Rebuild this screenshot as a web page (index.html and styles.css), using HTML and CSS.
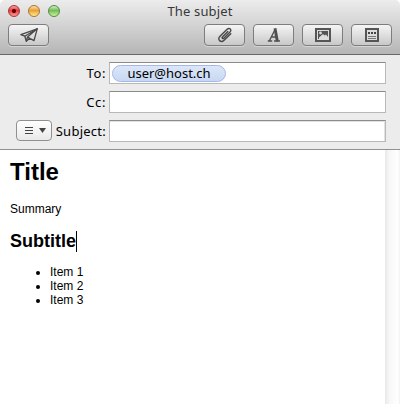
FILE: index.html
```html
<!DOCTYPE html>
<html lang="en">
<head>
<meta charset="utf-8">
<title>The subjet</title>
<link rel="stylesheet" href="styles.css">
</head>
<body>
<div class="window">
  <header class="titlebar">
    <div class="caption">
      <div class="lights"><i class="light red"></i><i class="light yellow"></i><i class="light green"></i></div>
      <span class="caption-text">The subjet</span>
    </div>
    <div class="toolbar">
      <button class="tool send" aria-label="Send">
        <svg width="20" height="16" viewBox="0 0 20 16" fill="none" stroke="#484848" stroke-width="1.3" stroke-linejoin="round"><path d="M1.8 7.6 18.2 1.8 15 13.6 10.5 11.2 7.3 14.2 5.8 9.2Z"/><path d="M5.8 9.2 18.2 1.8 8.5 10 7.3 14.2M8.5 10 10.5 11.2"/></svg>
      </button>
      <button class="tool" aria-label="Attach">
        <svg width="16" height="16" viewBox="0 0 16 16" fill="none" stroke="#484848" stroke-width="1.4" stroke-linecap="round"><path d="M10.8 4.6 5.4 9.9C4.4 10.9 5.8 12.2 6.8 11.2L13 5.1C15.2 2.8 12.4.2 10.1 2.3L3 9.2C-.4 12.6 4 16.3 7.1 13.2L13.8 6.8"/></svg>
      </button>
      <button class="tool" aria-label="Fonts">
        <svg width="16" height="16" viewBox="0 0 16 16" fill="none" stroke="#505050"><path d="M1.8 14H6.2M8 14H14M3.4 13.8 9.2 2.2M5.5 10H10.5" stroke-width="1.4"/><path d="M9 1.2 11.3 14.2" stroke-width="2.9"/></svg>
      </button>
      <button class="tool" aria-label="Photos">
        <svg width="16" height="14" viewBox="0 0 16 14"><rect width="16" height="14" fill="#555"/><rect x="2" y="2" width="12" height="10" fill="#ddd"/><path d="M3 3H13V9L11 6.5 9.5 7.5 8 6 4 9.5V11H3Z" fill="#555"/><circle cx="5.5" cy="5" r="1.4" fill="#ddd"/></svg>
      </button>
      <button class="tool" aria-label="Stationery">
        <svg width="14" height="14" viewBox="0 0 14 14"><rect width="14" height="14" fill="#555"/><rect x="2" y="2" width="10" height="10" fill="#ddd"/><path d="M3 4H5V6H3ZM6 4H8V6H6ZM9 4H11V6H9Z" fill="#444"/><path d="M3 8.5H11M3 10.5H11" stroke="#777"/></svg>
      </button>
    </div>
  </header>
  <section class="headers">
    <div class="row"><label class="label to">To:</label><div class="field"><span class="token"><span>user@host.ch</span></span></div></div>
    <div class="row"><label class="label cc">Cc:</label><div class="field"></div></div>
    <div class="row">
      <button class="menu" aria-label="Header fields"><svg width="34" height="19" viewBox="0 0 34 19"><path d="M8 6.5H16M8 9.5H16M8 12.5H16" stroke="#444"/><path d="M22 7H29L25.5 12Z" fill="#444"/></svg></button>
      <label class="label subject">Subject:</label><div class="field focus"></div>
    </div>
  </section>
  <main class="body">
    <article class="message">
      <h1>Title</h1>
      <p>Summary</p>
      <h2>Subtitle<i class="caret"></i></h2>
      <ul><li>Item 1</li><li>Item 2</li><li>Item 3</li></ul>
    </article>
    <div class="scroll"></div>
  </main>
</div>
</body>
</html>
```
FILE: styles.css
```css
* { box-sizing: border-box; }
body { margin: 0; background: #fff; font-family: "Noto Sans", sans-serif; color: #000; }
.window { width: 400px; height: 404px; display: flex; flex-direction: column; overflow: hidden; }
.titlebar {
  height: 55px; flex: none; border-bottom: 1px solid #686868; border-radius: 5px 5px 0 0;
  background: linear-gradient(#ececec, #d4d4d4 45%, #b5b5b5);
}
.caption { height: 24px; display: grid; grid-template-columns: 62px 1fr 62px; }
.lights { display: flex; gap: 8px; padding: 5px 0 0 8px; }
.light { width: 12px; height: 12px; border-radius: 50%; flex: none; }
.red { background: radial-gradient(circle at 50% 50%, #6c0000 0 1.7px, transparent 2.4px), linear-gradient(#f6a0a0, #e23c40 45%, #ff9d96); border: 1px solid #a5373a; }
.yellow { background: linear-gradient(#fce0ad, #eba136 45%, #ffec90); border: 1px solid #a9732e; }
.green { background: linear-gradient(#d1eec5, #75bd58 45%, #c6f59f); border: 1px solid #558843; }
.caption-text { font-size: 13px; line-height: 22px; text-align: center; color: #383838; letter-spacing: .15px; }
.toolbar { display: flex; gap: 8px; padding: 0 8px; }
.tool {
  width: 41px; height: 22px; padding: 0; border: 1px solid #7d7d7d; border-radius: 4px; flex: none;
  background: linear-gradient(#f5f5f5, #c8c8c8); box-shadow: 0 1px 0 #d4d4d4;
  display: flex; align-items: center; justify-content: center;
}
.send { margin-right: auto; }
.headers { height: 95px; flex: none; padding: 7px 14px 0 16px; background: #ececec; border-bottom: 1px solid #909090; display: flex; flex-direction: column; gap: 7px; }
.row { height: 22px; flex: none; display: flex; justify-content: flex-end; }
.label { font-size: 13px; line-height: 22px; margin-right: 3px; white-space: nowrap; letter-spacing: .25px; }
.to, .cc { letter-spacing: .6px; }
.field { width: 277px; height: 22px; flex: none; background: #fff; border: 1px solid #b9b9b9; border-top-color: #8b8b8b; padding: 2px; }
.focus { box-shadow: inset -1px 1px 0 #e2e2e2; }
.token {
  display: block; width: 114px; height: 17px; border: 1px solid #a5b7ea; border-radius: 9px;
  background: linear-gradient(#dce6f8, #c8d8f2); font-size: 13px; line-height: 15px; text-align: center;
}
.menu { width: 36px; height: 21px; padding: 0; margin-right: auto; border: 1px solid #909090; border-radius: 4px; background: linear-gradient(#fff, #e9e9e9); display: flex; }
.body { flex: 1; display: flex; }
.message { flex: 1; padding: 0 10px; font: 12px/14px "Liberation Sans", sans-serif; }
.message h1 { font-size: 24px; line-height: 28px; margin: 8px 0 16px; }
.message p { margin: 0 0 15px; }
.message h2 { font-size: 18px; line-height: 21px; margin: 0 0 13px; display: flex; align-items: center; }
.caret { width: 1px; height: 21px; background: #000; }
.message ul { margin: 0; padding-left: 40px; }
.scroll { width: 15px; background: linear-gradient(90deg, #e9e9e9, #f7f7f7 30%, #fff 85%, #f1f1f1); }
```
